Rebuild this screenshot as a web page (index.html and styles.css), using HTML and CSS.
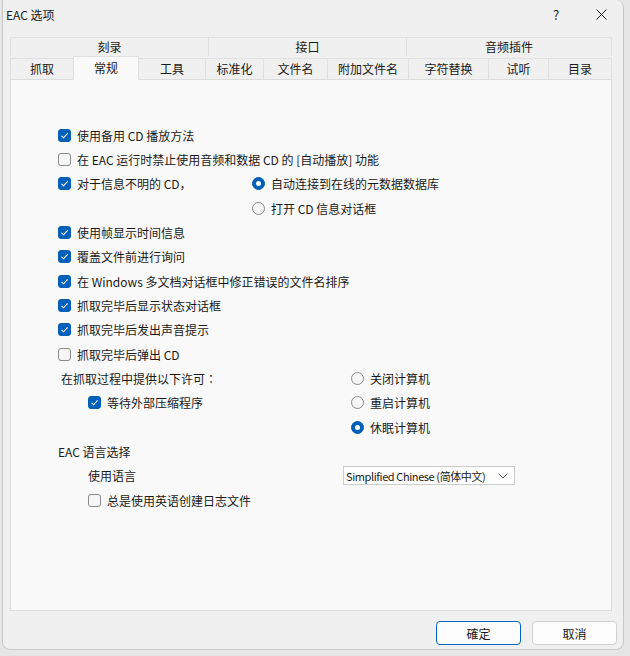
FILE: index.html
```html
<!DOCTYPE html>
<html lang="zh-CN">
<head>
  <meta charset="UTF-8">
  <title>EAC 选项</title>
  <link rel="stylesheet" href="styles.css">
</head>
<body>

<div class="window">
  <div class="titlebar">
    <div class="title">EAC 选项</div>
    <div class="tb-btn help">?</div>
    <div class="tb-btn close">
      <svg width="11" height="11" viewBox="0 0 11 11"><path d="M0.5 0.5 L10.5 10.5 M10.5 0.5 L0.5 10.5" stroke="#1a1a1a" stroke-width="1" fill="none"/></svg>
    </div>
  </div>

  <div class="tabs">
    <div class="tab-row top-row">
      <div class="tab" style="width:198px">刻录</div>
      <div class="tab" style="width:198px">接口</div>
      <div class="tab" style="width:206px">音频插件</div>
    </div>
    <div class="tab-row bottom-row">
      <div class="tab" style="width:63px">抓取</div>
      <div class="tab selected" style="width:66px">常规</div>
      <div class="tab" style="width:66px">工具</div>
      <div class="tab" style="width:58px">标准化</div>
      <div class="tab" style="width:64px">文件名</div>
      <div class="tab" style="width:81px">附加文件名</div>
      <div class="tab" style="width:80px">字符替换</div>
      <div class="tab" style="width:60px">试听</div>
      <div class="tab" style="width:64px">目录</div>
    </div>
  </div>

  <div class="panel">
    <div class="row"><span class="check on"></span>使用备用 CD 播放方法</div>
    <div class="row"><span class="check"></span>在 EAC 运行时禁止使用音频和数据 CD 的 [自动播放] 功能</div>

    <div class="split split-cd">
      <div class="col-left">
        <div class="row"><span class="check on"></span>对于信息不明的 CD，</div>
      </div>
      <div class="col-right">
        <div class="row"><span class="radio on"></span>自动连接到在线的元数据数据库</div>
        <div class="row"><span class="radio"></span>打开 CD 信息对话框</div>
      </div>
    </div>

    <div class="row"><span class="check on"></span>使用帧显示时间信息</div>
    <div class="row"><span class="check on"></span>覆盖文件前进行询问</div>
    <div class="row"><span class="check on"></span>在 Windows 多文档对话框中修正错误的文件名排序</div>
    <div class="row"><span class="check on"></span>抓取完毕后显示状态对话框</div>
    <div class="row"><span class="check on"></span>抓取完毕后发出声音提示</div>
    <div class="row"><span class="check"></span>抓取完毕后弹出 CD</div>

    <div class="split split-power">
      <div class="col-left">
        <div class="row label-row">在抓取过程中提供以下许可<span class="mid-punct">：</span></div>
        <div class="row indent"><span class="check on"></span>等待外部压缩程序</div>
      </div>
      <div class="col-right">
        <div class="row"><span class="radio"></span>关闭计算机</div>
        <div class="row"><span class="radio"></span>重启计算机</div>
        <div class="row"><span class="radio on"></span>休眠计算机</div>
      </div>
    </div>

    <div class="row">EAC 语言选择</div>
    <div class="split split-lang">
      <div class="col-left">
        <div class="row indent">使用语言</div>
      </div>
      <div class="col-right">
        <div class="row">
          <div class="select">
            <span class="select-text">Simplified Chinese (简体中文)</span>
            <svg width="10" height="6" viewBox="0 0 10 6"><path d="M0.5 0.5 L5 5 L9.5 0.5" stroke="#555" stroke-width="1" fill="none"/></svg>
          </div>
        </div>
      </div>
    </div>
    <div class="row indent"><span class="check"></span>总是使用英语创建日志文件</div>
  </div>

  <div class="buttons">
    <div class="btn default">確定</div>
    <div class="btn">取消</div>
  </div>
</div>

</body>
</html>
```

FILE: styles.css
```css
* {
  box-sizing: border-box;
}

body {
  margin: 0;
  background-color: #e6e6e6;
  font-family: "Noto Sans CJK SC", "Noto Sans", sans-serif;
  font-size: 12px;
  color: #1a1a1a;
}

.window {
  margin-left: 2px;
  width: 622px;
  height: 650px;
  background-color: #f0f0f0;
  border: 1px solid #c8c8c8;
  border-top: none;
  border-radius: 0 8px 8px 8px;
  display: flex;
  flex-direction: column;
}

.titlebar {
  height: 28px;
  display: flex;
  align-items: center;
}

.title {
  flex: 1;
  padding-left: 3px;
}

.tb-btn {
  width: 44px;
  height: 28px;
  display: flex;
  align-items: center;
  justify-content: center;
}

.help {
  font-size: 13px;
  padding-right: 2px;
}

.tabs {
  margin-top: 9px;
  margin-left: 7px;
  width: 602px;
}

.tab-row {
  display: flex;
}

.tab {
  display: flex;
  align-items: center;
  justify-content: center;
  border: 1px solid #e0e0e0;
  border-right: none;
  background-color: #f0f0f0;
}

.tab:last-child {
  border-right: 1px solid #e0e0e0;
}

.top-row .tab {
  height: 19px;
  padding-bottom: 1px;
  border-bottom: none;
}

.bottom-row {
  align-items: flex-end;
}

.bottom-row .tab {
  height: 22px;
  padding-bottom: 1px;
  border-bottom: 1px solid #dcdcdc;
}

.bottom-row .tab.selected {
  height: 24px;
  padding-bottom: 2px;
  background-color: #f9f9f9;
  border-bottom-color: #f9f9f9;
  border-right: 1px solid #e0e0e0;
}

.bottom-row .tab.selected + .tab {
  border-left: none;
}

.panel {
  margin-left: 7px;
  width: 602px;
  height: 531px;
  background-color: #f9f9f9;
  border: 1px solid #dcdcdc;
  border-top: none;
  padding-top: 43px;
  padding-left: 47px;
}

.row {
  height: 24.33px;
  display: flex;
  align-items: center;
  white-space: nowrap;
}

.split {
  display: flex;
}

.split-cd .col-left {
  width: 194px;
}

.split-power .col-left {
  width: 293px;
}

.split-lang .col-left {
  width: 285px;
}

.label-row {
  padding-left: 3px;
}

.mid-punct {
  font-family: "Noto Sans CJK TC", sans-serif;
}

.indent {
  padding-left: 30px;
}

.check,
.radio {
  flex: none;
  width: 13px;
  height: 13px;
  margin-right: 6px;
  border: 1px solid #8a8a8a;
  background-color: #f6f6f6;
}

.check {
  border-radius: 3px;
}

.check.on {
  border-color: #005fb8;
  background: #005fb8 url("data:image/svg+xml,%3Csvg xmlns='http://www.w3.org/2000/svg' width='11' height='11' viewBox='0 0 11 11'%3E%3Cpath d='M2.5 5.8 L4.6 7.8 L8.6 3.4' stroke='white' stroke-width='1.1' fill='none'/%3E%3C/svg%3E") center no-repeat;
}

.radio {
  border-radius: 50%;
}

.radio.on {
  border-color: #005fb8;
  background-color: #005fb8;
  display: flex;
  align-items: center;
  justify-content: center;
}

.radio.on::after {
  content: "";
  width: 5px;
  height: 5px;
  border-radius: 50%;
  background-color: #fff;
}

.select {
  width: 172px;
  height: 19px;
  background-color: #fff;
  border: 1px solid #cccccc;
  display: flex;
  align-items: center;
  justify-content: space-between;
  padding: 0 6px 0 2px;
}

.select-text {
  font-size: 11px;
  letter-spacing: -0.4px;
}

.buttons {
  margin-top: 10px;
  display: flex;
  justify-content: flex-end;
  gap: 11px;
  padding-right: 6px;
}

.btn {
  width: 85px;
  height: 24px;
  display: flex;
  align-items: center;
  justify-content: center;
  background-color: #fdfdfd;
  border: 1px solid #d0d0d0;
  border-radius: 4px;
}

.btn.default {
  border-color: #0067c0;
}
```
